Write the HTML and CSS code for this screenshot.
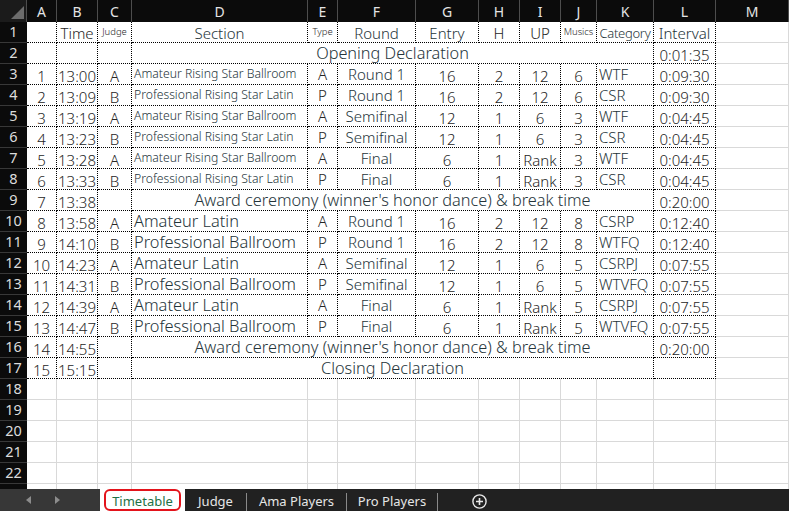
FILE: index.html
```html
<!DOCTYPE html>
<html>
<head>
<meta charset="utf-8">
<title>Timetable</title>
<link rel="stylesheet" href="styles.css">
</head>
<body>
<div class="sheet">
  <div class="grid">
    <div class="corner"><div class="tri"></div></div>
    <div class="ch">A</div><div class="ch">B</div><div class="ch">C</div><div class="ch">D</div><div class="ch">E</div><div class="ch">F</div><div class="ch">G</div><div class="ch">H</div><div class="ch">I</div><div class="ch">J</div><div class="ch">K</div><div class="ch">L</div><div class="ch">M</div>

    <div class="rh">1</div>
    <div class="t"></div><div class="t hd">Time</div><div class="t xs">Judge</div><div class="t tx hd">Section</div><div class="t xs">Type</div><div class="t tx hd">Round</div><div class="t tx hd">Entry</div><div class="t hd">H</div><div class="t hd">UP</div><div class="t xs">Musics</div><div class="t tx hd cat">Category</div><div class="t tx hd">Interval</div><div class="c"></div>

    <div class="rh">2</div>
    <div class="t"></div><div class="t"></div><div class="t"></div><div class="t tx sp">Opening Declaration</div><div class="t n">0:01:35</div><div class="c"></div>

    <div class="rh">3</div>
    <div class="t n">1</div><div class="t n">13:00</div><div class="t n">A</div><div class="t tx l s">Amateur Rising Star Ballroom</div><div class="t">A</div><div class="t tx">Round 1</div><div class="t n">16</div><div class="t n">2</div><div class="t n">12</div><div class="t n">6</div><div class="t tx l">WTF</div><div class="t n">0:09:30</div><div class="c"></div>

    <div class="rh">4</div>
    <div class="t n">2</div><div class="t n">13:09</div><div class="t n">B</div><div class="t tx l s">Professional Rising Star Latin</div><div class="t">P</div><div class="t tx">Round 1</div><div class="t n">16</div><div class="t n">2</div><div class="t n">12</div><div class="t n">6</div><div class="t tx l">CSR</div><div class="t n">0:09:30</div><div class="c"></div>

    <div class="rh">5</div>
    <div class="t n">3</div><div class="t n">13:19</div><div class="t n">A</div><div class="t tx l s">Amateur Rising Star Ballroom</div><div class="t">A</div><div class="t tx">Semifinal</div><div class="t n">12</div><div class="t n">1</div><div class="t n">6</div><div class="t n">3</div><div class="t tx l">WTF</div><div class="t n">0:04:45</div><div class="c"></div>

    <div class="rh">6</div>
    <div class="t n">4</div><div class="t n">13:23</div><div class="t n">B</div><div class="t tx l s">Professional Rising Star Latin</div><div class="t">P</div><div class="t tx">Semifinal</div><div class="t n">12</div><div class="t n">1</div><div class="t n">6</div><div class="t n">3</div><div class="t tx l">CSR</div><div class="t n">0:04:45</div><div class="c"></div>

    <div class="rh">7</div>
    <div class="t n">5</div><div class="t n">13:28</div><div class="t n">A</div><div class="t tx l s">Amateur Rising Star Ballroom</div><div class="t">A</div><div class="t tx">Final</div><div class="t n">6</div><div class="t n">1</div><div class="t n">Rank</div><div class="t n">3</div><div class="t tx l">WTF</div><div class="t n">0:04:45</div><div class="c"></div>

    <div class="rh">8</div>
    <div class="t n">6</div><div class="t n">13:33</div><div class="t n">B</div><div class="t tx l s">Professional Rising Star Latin</div><div class="t">P</div><div class="t tx">Final</div><div class="t n">6</div><div class="t n">1</div><div class="t n">Rank</div><div class="t n">3</div><div class="t tx l">CSR</div><div class="t n">0:04:45</div><div class="c"></div>

    <div class="rh">9</div>
    <div class="t n">7</div><div class="t n">13:38</div><div class="t"></div><div class="t tx sp">Award ceremony (winner's honor dance) &amp; break time</div><div class="t n">0:20:00</div><div class="c"></div>

    <div class="rh">10</div>
    <div class="t n">8</div><div class="t n">13:58</div><div class="t n">A</div><div class="t tx l d">Amateur Latin</div><div class="t">A</div><div class="t tx">Round 1</div><div class="t n">16</div><div class="t n">2</div><div class="t n">12</div><div class="t n">8</div><div class="t tx l">CSRP</div><div class="t n">0:12:40</div><div class="c"></div>

    <div class="rh">11</div>
    <div class="t n">9</div><div class="t n">14:10</div><div class="t n">B</div><div class="t tx l d">Professional Ballroom</div><div class="t">P</div><div class="t tx">Round 1</div><div class="t n">16</div><div class="t n">2</div><div class="t n">12</div><div class="t n">8</div><div class="t tx l">WTFQ</div><div class="t n">0:12:40</div><div class="c"></div>

    <div class="rh">12</div>
    <div class="t n">10</div><div class="t n">14:23</div><div class="t n">A</div><div class="t tx l d">Amateur Latin</div><div class="t">A</div><div class="t tx">Semifinal</div><div class="t n">12</div><div class="t n">1</div><div class="t n">6</div><div class="t n">5</div><div class="t tx l">CSRPJ</div><div class="t n">0:07:55</div><div class="c"></div>

    <div class="rh">13</div>
    <div class="t n">11</div><div class="t n">14:31</div><div class="t n">B</div><div class="t tx l d">Professional Ballroom</div><div class="t">P</div><div class="t tx">Semifinal</div><div class="t n">12</div><div class="t n">1</div><div class="t n">6</div><div class="t n">5</div><div class="t tx l">WTVFQ</div><div class="t n">0:07:55</div><div class="c"></div>

    <div class="rh">14</div>
    <div class="t n">12</div><div class="t n">14:39</div><div class="t n">A</div><div class="t tx l d">Amateur Latin</div><div class="t">A</div><div class="t tx">Final</div><div class="t n">6</div><div class="t n">1</div><div class="t n">Rank</div><div class="t n">5</div><div class="t tx l">CSRPJ</div><div class="t n">0:07:55</div><div class="c"></div>

    <div class="rh">15</div>
    <div class="t n">13</div><div class="t n">14:47</div><div class="t n">B</div><div class="t tx l d">Professional Ballroom</div><div class="t">P</div><div class="t tx">Final</div><div class="t n">6</div><div class="t n">1</div><div class="t n">Rank</div><div class="t n">5</div><div class="t tx l">WTVFQ</div><div class="t n">0:07:55</div><div class="c"></div>

    <div class="rh">16</div>
    <div class="t n">14</div><div class="t n">14:55</div><div class="t"></div><div class="t tx sp">Award ceremony (winner's honor dance) &amp; break time</div><div class="t n">0:20:00</div><div class="c"></div>

    <div class="rh">17</div>
    <div class="t n">15</div><div class="t n">15:15</div><div class="t"></div><div class="t tx sp">Closing Declaration</div><div class="t"></div><div class="c"></div>

    <div class="rh">18</div>
    <div class="c"></div><div class="c"></div><div class="c"></div><div class="c"></div><div class="c"></div><div class="c"></div><div class="c"></div><div class="c"></div><div class="c"></div><div class="c"></div><div class="c"></div><div class="c"></div><div class="c"></div>
    <div class="rh">19</div>
    <div class="c"></div><div class="c"></div><div class="c"></div><div class="c"></div><div class="c"></div><div class="c"></div><div class="c"></div><div class="c"></div><div class="c"></div><div class="c"></div><div class="c"></div><div class="c"></div><div class="c"></div>
    <div class="rh">20</div>
    <div class="c"></div><div class="c"></div><div class="c"></div><div class="c"></div><div class="c"></div><div class="c"></div><div class="c"></div><div class="c"></div><div class="c"></div><div class="c"></div><div class="c"></div><div class="c"></div><div class="c"></div>
    <div class="rh">21</div>
    <div class="c"></div><div class="c"></div><div class="c"></div><div class="c"></div><div class="c"></div><div class="c"></div><div class="c"></div><div class="c"></div><div class="c"></div><div class="c"></div><div class="c"></div><div class="c"></div><div class="c"></div>
    <div class="rh">22</div>
    <div class="c"></div><div class="c"></div><div class="c"></div><div class="c"></div><div class="c"></div><div class="c"></div><div class="c"></div><div class="c"></div><div class="c"></div><div class="c"></div><div class="c"></div><div class="c"></div><div class="c"></div>
    <div class="rh"></div>
    <div class="c"></div><div class="c"></div><div class="c"></div><div class="c"></div><div class="c"></div><div class="c"></div><div class="c"></div><div class="c"></div><div class="c"></div><div class="c"></div><div class="c"></div><div class="c"></div><div class="c"></div>
  </div>

  <div class="tabs">
    <div class="nav">
      <span class="arl"></span>
      <span class="arr"></span>
    </div>
    <div class="active"><div class="box">Timetable</div></div>
    <div class="tab judge">Judge</div>
    <div class="sep"></div>
    <div class="tab ama">Ama Players</div>
    <div class="sep"></div>
    <div class="tab pro">Pro Players</div>
    <div class="sep"></div>
    <div class="add">
      <svg width="15" height="15" viewBox="0 0 15 15"><circle cx="7.5" cy="7.5" r="6.6" fill="none" stroke="#e8e8e8" stroke-width="1.4"/><path d="M7.5 4v7M4 7.5h7" stroke="#e8e8e8" stroke-width="1.6"/></svg>
    </div>
  </div>
</div>
</body>
</html>
```

FILE: styles.css
```css
html, body {
  margin: 0;
  padding: 0;
  background: #ffffff;
}

body {
  font-family: "Noto Sans", "Liberation Sans", sans-serif;
}

.sheet {
  width: 789px;
  height: 511px;
  overflow: hidden;
  display: flex;
  flex-direction: column;
}

.grid {
  height: 489px;
  flex: none;
  overflow: hidden;
  display: grid;
  grid-template-columns: 27px 30px 41px 34px 176px 30px 78px 63px 41px 41px 36px 57px 62px 73px;
  grid-template-rows: 22px repeat(23, 21px);
}

.grid > div {
  box-sizing: border-box;
  display: flex;
  align-items: center;
  justify-content: center;
  white-space: nowrap;
  font-size: 15px;
  font-weight: 300;
  line-height: 1;
  color: #262626;
  min-width: 0;
}

.corner {
  background: #1b1b1b;
  border-right: 1px solid #4d4d4d;
  align-items: flex-end !important;
  justify-content: flex-end !important;
  padding: 0 2px 3px 0;
}

.tri {
  width: 0;
  height: 0;
  border-left: 13px solid transparent;
  border-bottom: 13px solid #6c6c6c;
}

.grid > .ch {
  background: #0b0b0b;
  color: #e4e4e4;
  font-size: 14px;
  font-weight: 400;
  border-right: 1px solid #4d4d4d;
  padding-top: 1px;
}

.grid > .rh {
  background: #0b0b0b;
  color: #dcdcdc;
  font-size: 14.5px;
  font-weight: 400;
  border-bottom: 1px solid #383838;
  padding-bottom: 2px;
}

.c {
  border-right: 1px solid #d9d9d9;
  border-bottom: 1px solid #d9d9d9;
}

.t {
  border-right: 1px dotted #000000;
  border-bottom: 1px dotted #000000;
}

.grid > .tx {
  color: #25343a;
}

.grid > .n {
  padding-top: 4px;
}

.grid > .hd {
  padding-top: 3px;
}

.grid > .l {
  justify-content: flex-start;
  padding-left: 2px;
}

.grid > .s {
  font-size: 12.2px;
}

.grid > .d {
  font-size: 16.4px;
}

.grid > .xs {
  font-size: 9.5px;
  padding-bottom: 1px;
}

.grid > .cat {
  font-size: 13px;
  letter-spacing: -0.3px;
}

.grid > .sp {
  grid-column: span 8;
  font-size: 16.3px;
}

.tabs {
  height: 22px;
  flex: none;
  display: flex;
  background: #212121;
  color: #e6e6e6;
  font-size: 13px;
}

.nav {
  width: 100px;
  flex: none;
  background: #373737;
  display: flex;
  align-items: center;
}

.arl {
  margin-left: 26px;
  width: 0;
  height: 0;
  border-right: 5px solid #8c8c8c;
  border-top: 4px solid transparent;
  border-bottom: 4px solid transparent;
}

.arr {
  margin-left: 24px;
  width: 0;
  height: 0;
  border-left: 5px solid #8c8c8c;
  border-top: 4px solid transparent;
  border-bottom: 4px solid transparent;
}

.active {
  width: 85px;
  flex: none;
  background: #ffffff;
  display: flex;
  padding-left: 4px;
  box-sizing: border-box;
}

.box {
  box-sizing: border-box;
  width: 77px;
  height: 22px;
  border: 2.5px solid #e3131b;
  border-radius: 6px;
  color: #1e7145;
  display: flex;
  align-items: center;
  justify-content: center;
  padding-top: 2px;
}

.tab {
  display: flex;
  align-items: center;
  justify-content: center;
  padding-top: 2px;
  flex: none;
}

.judge { width: 61px; }
.ama { width: 99px; }
.pro { width: 90px; }

.sep {
  width: 1px;
  height: 18px;
  align-self: flex-end;
  background: #8a8a8a;
  flex: none;
}

.add {
  margin-left: 34px;
  display: flex;
  align-items: center;
  padding-top: 3px;
}
```
